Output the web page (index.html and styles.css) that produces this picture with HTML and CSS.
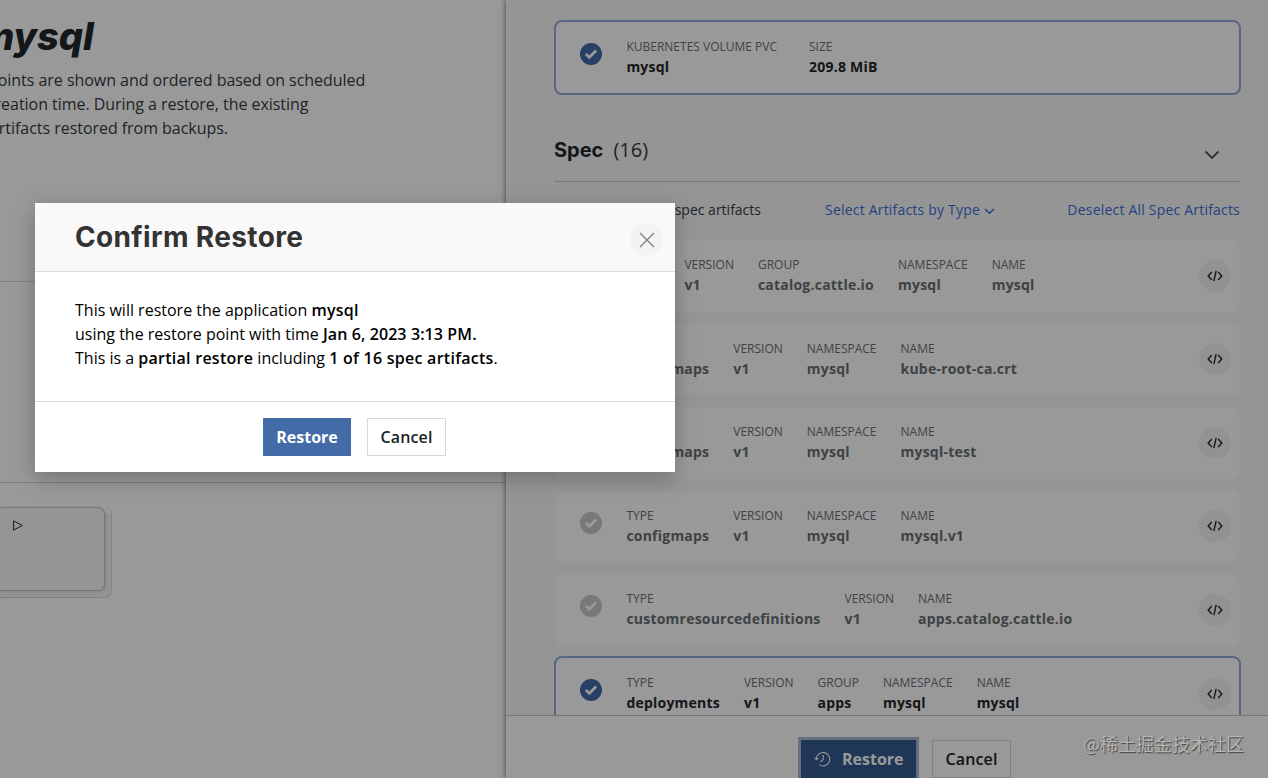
FILE: index.html
```
<!DOCTYPE html>
<html lang="en">
<head>
  <meta charset="UTF-8">
  <meta name="viewport" content="width=device-width, initial-scale=1.0">
  <title>Restore mysql</title>
  <link rel="stylesheet" href="styles.css">
</head>
<body>
  <!-- Shared icons -->
  <svg class="sprite" aria-hidden="true">
    <symbol id="icon-check" viewBox="0 0 22 22">
      <circle cx="11" cy="11" r="11" fill="currentColor"/>
      <path d="M5.800 10.900l3.600 3.400 6.700-6.700" fill="none" stroke="#fff" stroke-width="2.800"/>
    </symbol>
    <symbol id="icon-code" viewBox="0 0 16 12">
      <path d="M4.800 2L1.200 6l3.600 4M11.200 2l3.600 4-3.600 4M9.200 .8L6.800 11.200" fill="none" stroke="currentColor" stroke-width="1.400"/>
    </symbol>
    <symbol id="icon-chevron" viewBox="0 0 16 10">
      <path d="M1.500 1.500L8 8l6.500-6.500" fill="none" stroke="currentColor" stroke-width="1.800"/>
    </symbol>
  </svg>

  <div class="app">
    <main class="page">
      <header class="intro">
        <h1>mysql</h1>
        <p>points are shown and ordered based on scheduled<br><span class="line-2">creation time. During a restore, the existing</span><br><span class="line-3">artifacts restored from backups.</span></p>
      </header>
      <section class="filters"></section>
      <section class="points">
        <div class="stack">
          <div class="point">
            <svg class="play" viewBox="0 0 10 11"><path d="M.6 .9v9.200l8.700-4.600z" fill="none" stroke="currentColor"/></svg>
          </div>
        </div>
      </section>
    </main>

    <aside class="panel">
      <div class="panel-body">
        <div class="card selected volume">
          <svg class="check"><use href="#icon-check"/></svg>
          <dl><dt>KUBERNETES VOLUME PVC</dt><dd>mysql</dd></dl>
          <dl class="size"><dt>SIZE</dt><dd>209.8 MiB</dd></dl>
        </div>

        <div class="spec-title">
          <h2>Spec</h2>
          <span class="count">(16)</span>
          <svg class="toggle"><use href="#icon-chevron"/></svg>
        </div>

        <div class="spec-actions">
          <span class="summary">1 of 16 spec artifacts</span>
          <a href="#">Select Artifacts by Type <svg class="caret" viewBox="0 0 11 7"><path d="M1 1l4.500 4.200L10 1" fill="none" stroke="currentColor" stroke-width="1.500"/></svg></a>
          <a href="#" class="deselect">Deselect All Spec Artifacts</a>
        </div>

        <div class="cards">
          <div class="card">
            <svg class="check"><use href="#icon-check"/></svg>
            <dl class="apps"><dt>TYPE</dt><dd>apps</dd></dl>
            <dl><dt>VERSION</dt><dd>v1</dd></dl>
            <dl><dt>GROUP</dt><dd>catalog.cattle.io</dd></dl>
            <dl><dt>NAMESPACE</dt><dd>mysql</dd></dl>
            <dl><dt>NAME</dt><dd>mysql</dd></dl>
            <button class="code"><svg><use href="#icon-code"/></svg></button>
          </div>
          <div class="card">
            <svg class="check"><use href="#icon-check"/></svg>
            <dl><dt>TYPE</dt><dd>configmaps</dd></dl>
            <dl><dt>VERSION</dt><dd>v1</dd></dl>
            <dl><dt>NAMESPACE</dt><dd>mysql</dd></dl>
            <dl><dt>NAME</dt><dd>kube-root-ca.crt</dd></dl>
            <button class="code"><svg><use href="#icon-code"/></svg></button>
          </div>
          <div class="card">
            <svg class="check"><use href="#icon-check"/></svg>
            <dl><dt>TYPE</dt><dd>configmaps</dd></dl>
            <dl><dt>VERSION</dt><dd>v1</dd></dl>
            <dl><dt>NAMESPACE</dt><dd>mysql</dd></dl>
            <dl><dt>NAME</dt><dd>mysql-test</dd></dl>
            <button class="code"><svg><use href="#icon-code"/></svg></button>
          </div>
          <div class="card">
            <svg class="check"><use href="#icon-check"/></svg>
            <dl><dt>TYPE</dt><dd>configmaps</dd></dl>
            <dl><dt>VERSION</dt><dd>v1</dd></dl>
            <dl><dt>NAMESPACE</dt><dd>mysql</dd></dl>
            <dl><dt>NAME</dt><dd>mysql.v1</dd></dl>
            <button class="code"><svg><use href="#icon-code"/></svg></button>
          </div>
          <div class="card">
            <svg class="check"><use href="#icon-check"/></svg>
            <dl><dt>TYPE</dt><dd>customresourcedefinitions</dd></dl>
            <dl><dt>VERSION</dt><dd>v1</dd></dl>
            <dl><dt>NAME</dt><dd>apps.catalog.cattle.io</dd></dl>
            <button class="code"><svg><use href="#icon-code"/></svg></button>
          </div>
          <div class="card selected">
            <svg class="check"><use href="#icon-check"/></svg>
            <dl><dt>TYPE</dt><dd>deployments</dd></dl>
            <dl><dt>VERSION</dt><dd>v1</dd></dl>
            <dl><dt>GROUP</dt><dd>apps</dd></dl>
            <dl><dt>NAMESPACE</dt><dd>mysql</dd></dl>
            <dl><dt>NAME</dt><dd>mysql</dd></dl>
            <button class="code"><svg><use href="#icon-code"/></svg></button>
          </div>
        </div>
      </div>

      <footer class="panel-footer">
        <button class="btn primary focused">
          <svg class="history" viewBox="0 0 17 16">
            <path d="M2.300 8.500A6.700 6.700 0 1 1 5 13.600M.5 6.500l1.800 2.300 2.200-2M9.200 4v4.500L6.500 11" fill="none" stroke="currentColor" stroke-width="1.100"/>
          </svg>
          Restore
        </button>
        <button class="btn">Cancel</button>
      </footer>
    </aside>
  </div>

  <div class="overlay"></div>

  <div class="modal" role="dialog">
    <div class="modal-header">
      <h2>Confirm Restore</h2>
      <button class="close"><svg viewBox="0 0 16 16"><path d="M1 1l14 14M15 1L1 15" stroke="currentColor" stroke-width="1.500"/></svg></button>
    </div>
    <div class="modal-body">
      This will restore the application <b>mysql</b><br>
      using the restore point with time <b class="time">Jan 6, 2023 3:13 PM.</b><br>
      This is a <b>partial restore</b> including <b>1 of 16 spec artifacts</b>.
    </div>
    <div class="modal-footer">
      <button class="btn primary">Restore</button>
      <button class="btn">Cancel</button>
    </div>
  </div>

  <div class="watermark">@稀土掘金技术社区</div>
</body>
</html>
```
FILE: styles.css
```
* {
  box-sizing: border-box;
}
body {
  margin: 0;
  height: 778px;
  overflow: hidden;
  font-family: "Open Sans", "Noto Sans", sans-serif;
  font-size: 16px;
  line-height: 24px;
  color: #363b3e;
}
h1, h2, p, dl, dd {
  margin: 0;
}
h1, h2 {
  font-family: Inter, Roboto, sans-serif;
  font-weight: 700;
}
button {
  font-family: inherit;
}
.sprite {
  display: none;
}
.app {
  display: flex;
  height: 778px;
}

/* Left page */
.page {
  width: 506px;
  overflow: hidden;
  background: #fff;
}
.intro {
  height: 282px;
  padding-top: 12px;
  border-bottom: 1px solid #d8dadb;
}
.intro h1 {
  margin-left: -21px;
  font-size: 38px;
  line-height: 48px;
  font-weight: 800;
  font-style: italic;
  color: #22272a;
}
.intro p {
  margin: 8px 0 0 -12px;
  white-space: nowrap;
  letter-spacing: -.04px;
}
.line-2 {
  margin-left: -1px;
}
.line-3 {
  margin-left: 2px;
}
.filters {
  height: 201px;
  border-bottom: 1px solid #cfd1d2;
}
.points {
  padding-top: 24px;
}
.stack {
  width: 112px;
  height: 91px;
  background: linear-gradient(#f6f7f7, #f6f7f7) 0 6px no-repeat;
  border-right: 1px dotted #b5c0c3;
  border-bottom: 1px dotted #b5c0c3;
  border-radius: 0 8px 8px 0;
}
.point {
  width: 105px;
  height: 84px;
  padding: 12px 0 0 13px;
  background: #f8f8f8;
  border: 1px solid #c4c9cb;
  border-left: 0;
  border-radius: 0 7px 7px 0;
  box-shadow: 1px 1px 3px rgba(0, 0, 0, .12);
}
.play {
  display: block;
  width: 10px;
  height: 11px;
  color: #22272a;
}

/* Side panel */
.panel {
  display: flex;
  flex-direction: column;
  width: 762px;
  background: #f9f9f9;
  box-shadow: 0 0 6px rgba(0, 0, 0, .6);
  z-index: 1;
}
.panel-body {
  flex: 1;
  min-height: 0;
  overflow: hidden;
  padding: 20px 27px 0 48px;
}
.card {
  display: flex;
  gap: 24px;
  height: 75.6px;
  padding: 16px 8px 0 25px;
  background: #fff;
  background-clip: padding-box;
  border: 2px solid transparent;
  border-radius: 8px;
  color: #686e71;
}
.card.selected {
  border-color: #94abd5;
  color: #22272a;
}
.check {
  width: 22px;
  height: 22px;
  margin: 5px .4px 0 -1px;
  color: #c5c9cc;
}
.selected .check {
  color: #436ba8;
}
dt {
  font-size: 12px;
  line-height: 18px;
  color: #6b7174;
}
dd {
  font-size: 14px;
  line-height: 22px;
  font-weight: 700;
  letter-spacing: .22px;
}
.volume {
  height: 75px;
}
.size {
  margin-left: 8px;
}
.apps {
  width: 34px;
}
.code {
  width: 32px;
  height: 32px;
  margin: 3.6px 0 0 auto;
  padding: 0;
  display: grid;
  place-items: center;
  border: 0;
  border-radius: 50%;
  background: #f3f3f3;
  color: #22272a;
}
.code svg {
  width: 16px;
  height: 12px;
}
.spec-title {
  display: flex;
  align-items: center;
  height: 87px;
  padding-top: 24px;
  border-bottom: 1px solid #c8caca;
}
.spec-title h2 {
  font-size: 20px;
  color: #22272a;
}
.count {
  margin-left: 10px;
  font-size: 20px;
}
.toggle {
  width: 16px;
  height: 10px;
  margin: 9px 21px 0 auto;
  color: #4d5255;
}
.spec-actions {
  display: flex;
  height: 56px;
  padding-top: 16px;
  font-size: 14px;
}
.summary {
  width: 207px;
  text-align: right;
}
.spec-actions a {
  margin-left: 64px;
  color: #3b6fd8;
  letter-spacing: .2px;
  text-decoration: none;
}
.spec-actions .deselect {
  margin-left: auto;
  padding-right: 1px;
}
.caret {
  width: 11px;
  height: 7px;
}
.cards {
  display: flex;
  flex-direction: column;
  gap: 8px;
}
.cards .card {
  flex: none;
}
.panel-footer {
  display: flex;
  gap: 16px;
  height: 63px;
  padding: 24px 0 0 295px;
  overflow: hidden;
  background: #fff;
  border-top: 1px solid #c4c6c7;
}
.btn {
  flex: none;
  width: 79px;
  height: 38px;
  padding: 0;
  border: 1px solid #d5d8da;
  background: #fff;
  color: #1b1f23;
  font-size: 16px;
  line-height: 22px;
  font-weight: 600;
  letter-spacing: .15px;
}
.btn.primary {
  width: 88px;
  border-color: #436ba8;
  background: #436ba8;
  color: #fff;
  font-weight: 700;
  letter-spacing: 0;
}
.btn.focused {
  display: flex;
  align-items: center;
  width: 115px;
  padding-left: 12px;
  background: #345b92;
  border-color: #345b92;
  box-shadow: 0 0 0 3px #a9bbd3;
}
.history {
  width: 17px;
  height: 16px;
  margin-right: 11px;
}

.overlay {
  position: absolute;
  inset: 0;
  z-index: 2;
  background: rgba(0, 0, 0, .4);
}

/* Confirmation dialog */
.modal {
  position: absolute;
  top: 203px;
  left: 35px;
  z-index: 3;
  width: 640px;
  height: 269px;
  background: #fff;
  box-shadow: 0 6px 20px rgba(0, 0, 0, .25);
  color: #000;
}
.modal-header {
  display: flex;
  justify-content: space-between;
  height: 69px;
  padding: 17px 12px 0 40px;
  background: #f9f9f9;
  border-bottom: 1px solid #d9dbdc;
}
.modal-header h2 {
  font-size: 28px;
  line-height: 34px;
  letter-spacing: .35px;
  color: #333;
}
.close {
  width: 33px;
  height: 33px;
  margin-top: 3px;
  padding: 0;
  display: grid;
  place-items: center;
  border: 0;
  border-radius: 50%;
  background: #f3f3f3;
  color: #888;
}
.close svg {
  width: 16px;
  height: 16px;
}
.modal-body {
  height: 129px;
  padding: 26px 40px 0;
}
.modal-body b {
  font-weight: 600;
  letter-spacing: .26px;
}
.modal-body .time {
  letter-spacing: .1px;
}
.modal-footer {
  display: flex;
  justify-content: center;
  gap: 16px;
  padding: 16px 1px 0 0;
  border-top: 1px solid #d9dbdc;
}

.watermark {
  position: absolute;
  top: 731px;
  left: 1083px;
  z-index: 4;
  font-family: "Noto Sans CJK SC", sans-serif;
  font-size: 18px;
  color: #b4b4b4;
  text-shadow: 1px 1px 1px #444;
}
```
